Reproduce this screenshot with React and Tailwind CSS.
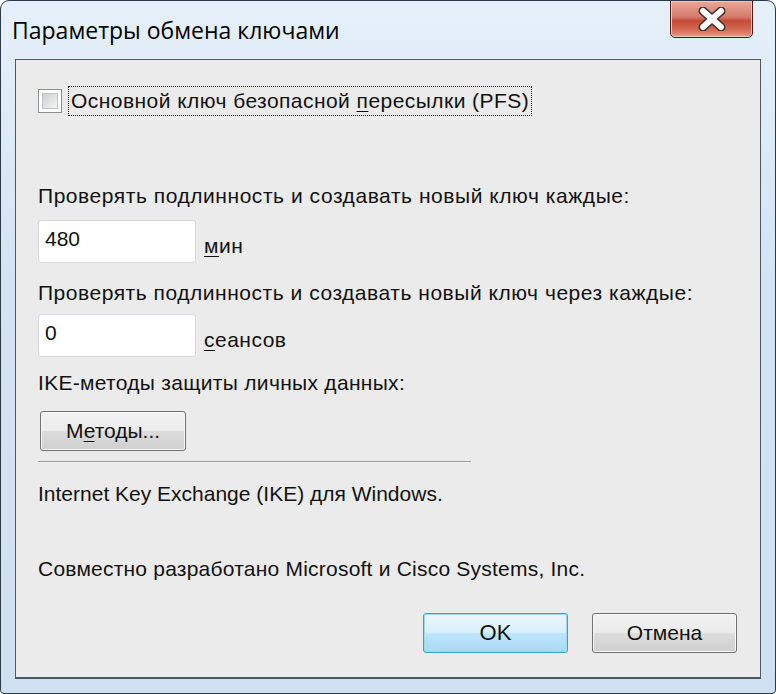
import React from "react";

const font = { fontFamily: '"Liberation Sans", Arial, sans-serif' };

const Underline = ({ children }) => <span className="underline underline-offset-[3px] decoration-1">{children}</span>;

const TextField = ({ value, hot, rest }) => (
  <div className="flex items-center">
    <div className="w-[158px] h-[43px] bg-white border border-[#d5d9de] rounded-[3px] pl-[6px] pt-[6px] text-[21px] leading-[24px] text-[#111]">
      {value}
    </div>
    <div className="ml-[8px] pt-[8px] text-[21px] leading-[24px] tracking-[0.5px] text-[#111]">
      <Underline>{hot}</Underline>
      {rest}
    </div>
  </div>
);

const WinButton = ({ children, primary, className = "" }) => (
  <div
    className={`flex items-center justify-center rounded-[3px] border text-[21px] leading-[24px] text-[#111] ${
      primary
        ? "border-[#3c9fd6] shadow-[inset_0_0_0_1px_#9fd8f5] bg-[linear-gradient(#eaf6fd_0%,#d9f0fc_50%,#bee6fd_50%,#a7d9f5_100%)]"
        : "border-[#707070] shadow-[inset_0_0_0_1px_#fafafa] bg-[linear-gradient(#f2f2f2_0%,#ebebeb_50%,#dddddd_50%,#cfcfcf_100%)]"
    } ${className}`}
  >
    {children}
  </div>
);

export default function App() {
  return (
    <div className="w-[776px] h-[694px] bg-white">
      <div className="w-full h-full flex flex-col border border-[#2d3a46] rounded-t-[9px] rounded-b-[4px] overflow-hidden bg-[linear-gradient(180deg,#e6f0fa_0%,#d3e3f3_40%,#cfe0f1_100%)]">
        <div className="h-[58px] flex items-start justify-between">
          <div className="pl-[11px] pt-[15px] text-[23px] leading-[28px] text-black" style={{ fontFamily: '"Open Sans", "Noto Sans", sans-serif' }}>
            Параметры обмена ключами
          </div>
          <div className="mr-[22px] w-[83px] h-[38px] -mt-px rounded-b-[5px] border border-[#4a1d17] flex items-center justify-center bg-[linear-gradient(180deg,#e9a99c_0%,#d47868_45%,#c44a36_55%,#d56a55_80%,#e79c8c_100%)] shadow-[inset_0_0_0_1px_#f2c6bd]">
            <svg width="30" height="24" viewBox="0 0 30 24">
              <path d="M6 4 L24 20 M24 4 L6 20" fill="none" stroke="#3b2b2b" strokeWidth="9" strokeLinecap="round" />
              <path d="M6 4 L24 20 M24 4 L6 20" fill="none" stroke="#ffffff" strokeWidth="6" strokeLinecap="round" />
            </svg>
          </div>
        </div>
        <div className="flex-1 mx-[14px] border border-[#4b5866] border-b-[2px] bg-[#ebebeb] flex flex-col pl-[22px] pr-[23px]" style={font}>
          <div className="mt-[26px] h-[30px] flex items-center">
            <div className="w-[24px] h-[24px] border border-[#8e8f8f] bg-white p-[3px]">
              <div className="w-full h-full border border-[#c0c3c6] bg-[linear-gradient(135deg,#cbcfd4,#f4f4f4)]" />
            </div>
            <div className="ml-[6px] h-[30px] px-[2px] flex items-center border border-dotted border-[#222] text-[21px] leading-[24px] tracking-[0.45px] text-[#111]">
              <span>
                Основной ключ безопасной <Underline>п</Underline>ересылки (PFS)
              </span>
            </div>
          </div>
          <div className="mt-[68px] text-[21px] leading-[24px] tracking-[0.55px] text-[#111]">
            Проверять подлинность и создавать новый ключ каждые:
          </div>
          <div className="mt-[12px]">
            <TextField value="480" hot="м" rest="ин" />
          </div>
          <div className="mt-[18px] text-[21px] leading-[24px] tracking-[0.53px] text-[#111]">
            Проверять подлинность и создавать новый ключ через каждые:
          </div>
          <div className="mt-[9px]">
            <TextField value="0" hot="с" rest="еансов" />
          </div>
          <div className="mt-[14px] text-[21px] leading-[24px] tracking-[0.3px] text-[#111]">
            IKE-методы защиты личных данных:
          </div>
          <WinButton className="mt-[16px] w-[146px] h-[40px] ml-[2px]">
            <span>
              М<Underline>е</Underline>тоды...
            </span>
          </WinButton>
          <div className="mt-[10px] w-[433px] h-px bg-[#a0a0a0]" />
          <div className="mt-[20px] text-[21px] leading-[24px] text-[#111]">
            Internet Key Exchange (IKE) для Windows.
          </div>
          <div className="mt-[51px] text-[21px] leading-[24px] tracking-[0.22px] text-[#111]">
            Совместно разработано Microsoft и Cisco Systems, Inc.
          </div>
          <div className="mt-[32px] flex justify-end gap-[24px]">
            <WinButton primary className="w-[145px] h-[40px] text-[22px]">
              OK
            </WinButton>
            <WinButton className="w-[145px] h-[40px]">Отмена</WinButton>
          </div>
        </div>
        <div className="h-[14px]" />
      </div>
    </div>
  );
}
